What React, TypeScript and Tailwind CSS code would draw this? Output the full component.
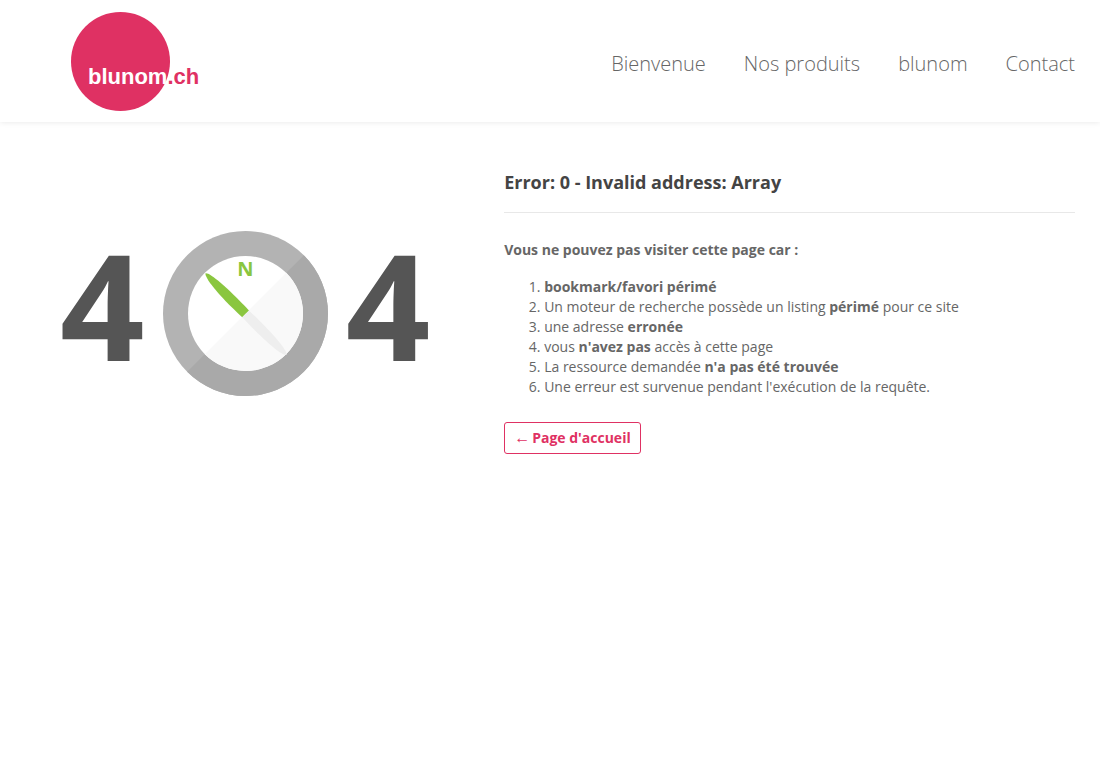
const navLinks = ["Bienvenue", "Nos produits", "blunom", "Contact"];

const Logo = () => (
  <svg
    width="136"
    height="122"
    viewBox="0 0 136 122"
    role="img"
    aria-label="blunom.ch"
    className="block font-['Liberation_Sans'] text-[22px] font-bold"
  >
    <circle cx="50.5" cy="61.5" r="49.5" fill="#df3163" />
    <text x="18" y="84">
      <tspan fill="#fff">blunom</tspan>
      <tspan fill="#df3163">.ch</tspan>
    </text>
  </svg>
);

const Compass = () => (
  <svg
    width="165"
    height="165"
    viewBox="0 0 165 165"
    aria-hidden="true"
    className="block text-xl font-bold"
  >
    {/* ring, with the lower half shaded */}
    <circle cx="82.5" cy="82.5" r="82.5" fill="#b3b3b3" />
    <path
      d="M140.837 24.163A82.5 82.5 0 0 1 24.163 140.837Z"
      fill="#a9a9a9"
    />
    {/* dial */}
    <circle cx="82.5" cy="82.5" r="57.5" fill="#fff" />
    <path
      d="M123.159 41.841A57.5 57.5 0 0 1 41.841 123.159Z"
      fill="#f9f9f9"
    />
    <text x="82.5" y="45" textAnchor="middle" fill="#8ac63f">
      N
    </text>
    {/* needle */}
    <path
      d="M42.5 42.3C46 41 62 54 86 79.5L79.2 86.3C54 63 41.5 46.5 42.5 42.3Z"
      fill="#8ac63f"
    />
    <path
      d="M123.5 123.7C119.5 125.5 102 110.5 79.2 86.3L86 79.5C111 103 125 120.5 123.5 123.7Z"
      fill="#eee"
    />
  </svg>
);

const Header = () => (
  <header className="flex items-center justify-between bg-white pr-[25px] pl-[70px] shadow-[0_0_6px_rgba(0,0,0,0.1)]">
    <a href="#">
      <Logo />
    </a>
    <nav className="pt-[6px]">
      <ul className="flex gap-[38px] text-xl leading-7 font-light text-[#666]">
        {navLinks.map((link) => (
          <li key={link}>
            <a href="#">{link}</a>
          </li>
        ))}
      </ul>
    </nav>
  </header>
);

export default function App() {
  return (
    <div className="min-h-screen bg-white font-['Open_Sans',sans-serif] text-sm leading-5 text-[#666]">
      <Header />
      <main className="grid grid-cols-[5fr_7fr] pt-12 pr-[10px] pl-[60px]">
        <div className="flex items-start gap-[18px] pt-[61px] text-[148px] leading-[146px] font-bold text-[#555]">
          <span>4</span>
          <Compass />
          <span>4</span>
        </div>

        <div className="px-[15px]">
          <h1 className="border-b border-[#e8e8e8] pb-[18px] text-lg leading-6 font-bold text-[#444]">
            Error: 0 - Invalid address: Array
          </h1>
          <p className="mt-[27px] font-bold">
            Vous ne pouvez pas visiter cette page car :
          </p>
          <ol className="mt-[17px] list-decimal pl-10">
            <li>
              <strong>bookmark/favori périmé</strong>
            </li>
            <li>
              Un moteur de recherche possède un listing <strong>périmé</strong>{" "}
              pour ce site
            </li>
            <li>
              une adresse <strong>erronée</strong>
            </li>
            <li>
              vous <strong>n'avez pas</strong> accès à cette page
            </li>
            <li>
              La ressource demandée <strong>n'a pas été trouvée</strong>
            </li>
            <li>Une erreur est survenue pendant l'exécution de la requête.</li>
          </ol>
          <button
            type="button"
            className="mt-[25px] flex items-center gap-[2px] rounded-[3px] border border-[#df3163] px-[9px] py-[5px] font-bold text-[#df3163]"
          >
            <span className="font-['Liberation_Serif'] text-base leading-none font-normal">
              ←
            </span>
            Page d'accueil
          </button>
        </div>
      </main>
    </div>
  );
}
